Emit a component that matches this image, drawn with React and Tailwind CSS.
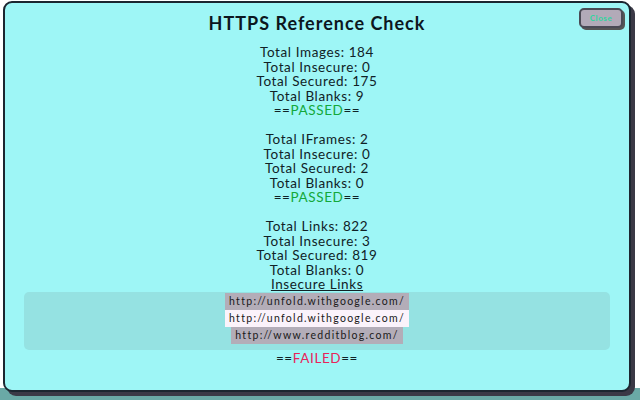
const images = [
  "Total Images: 184",
  "Total Insecure: 0",
  "Total Secured: 175",
  "Total Blanks: 9",
];
const frames = [
  "Total IFrames: 2",
  "Total Insecure: 0",
  "Total Secured: 2",
  "Total Blanks: 0",
];
const links = [
  "Total Links: 822",
  "Total Insecure: 3",
  "Total Secured: 819",
  "Total Blanks: 0",
];
const insecure = [
  { url: "http://unfold.withgoogle.com/", bg: "bg-[#b3adb8]" },
  { url: "http://unfold.withgoogle.com/", bg: "bg-[#fbf3fb]" },
  { url: "http://www.redditblog.com/", bg: "bg-[#b3adb8]" },
];

function Status({ ok }) {
  return (
    <div>
      ==
      <span className={ok ? "text-[#13a83a]" : "text-[#e8245a]"}>
        {ok ? "PASSED" : "FAILED"}
      </span>
      ==
    </div>
  );
}

function Lines({ items }) {
  return items.map((t, i) => <div key={i}>{t}</div>);
}

export default function App() {
  return (
    <div
      className="w-[640px] h-[400px] overflow-hidden bg-[linear-gradient(to_bottom,#ffffff_0%,#ffffff_97%,#6aa9a6_97%)] pt-[1px] pl-[3px]"
      style={{ fontFamily: '"Lato", "Open Sans", sans-serif' }}
    >
      <div className="relative w-[628px] h-[391px] rounded-[9px] border-2 border-[#1c2630] bg-[#9ef6f6] shadow-[4px_4px_0_#3b3946] text-[#102226] text-[13.5px] leading-[14.5px] tracking-[0.6px] text-center">
        <button className="absolute right-[6px] top-[5px] w-[44px] h-[20px] rounded-[5px] border-2 border-[#4a4a55] bg-[#b2aab8] shadow-[2px_2px_0_#555] text-[8px] font-bold text-[#2fd6a0]">
          Close
        </button>
        <h1 className="pt-[10px] text-[18px] leading-[20px] font-bold text-[#0c1620] tracking-[1px]">
          HTTPS Reference Check
        </h1>
        <div className="mt-[12px]">
          <Lines items={images} />
          <Status ok />
          <div className="h-[14.5px]" />
          <Lines items={frames} />
          <Status ok />
          <div className="h-[14.5px]" />
          <Lines items={links} />
          <div className="underline">Insecure Links</div>
        </div>
        <div className="mx-[19px] rounded-[5px] bg-[#95e2e2] pt-[1px] pb-[6px] flex flex-col items-center">
          {insecure.map((l, i) => (
            <div
              key={i}
              className={`${l.bg} px-[4px] py-[2px] text-[10.5px] leading-[13px] tracking-[1.3px] text-[#1a1a1a]`}
            >
              {l.url}
            </div>
          ))}
        </div>
        <div className="mt-[1px]">
          <Status ok={false} />
        </div>
      </div>
    </div>
  );
}
